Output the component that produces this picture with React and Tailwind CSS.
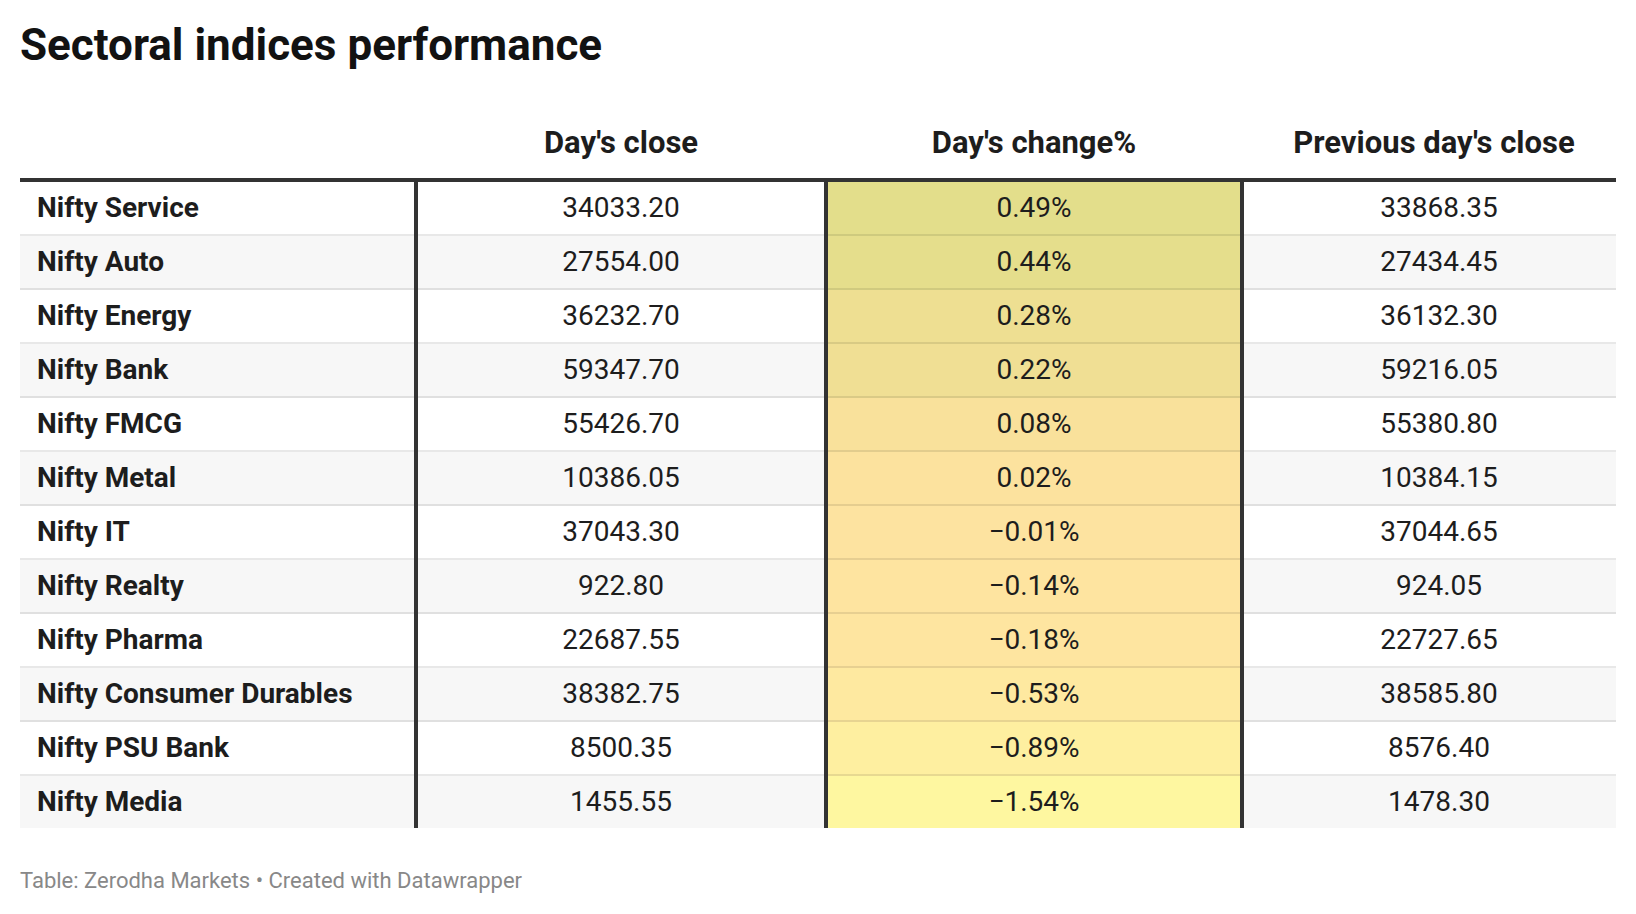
import React from 'react'

const rows = [
  { name: 'Nifty Service', close: '34033.20', change: '0.49%', prev: '33868.35', color: 'bg-[#e3de8b]' },
  { name: 'Nifty Auto', close: '27554.00', change: '0.44%', prev: '27434.45', color: 'bg-[#e5de8c]' },
  { name: 'Nifty Energy', close: '36232.70', change: '0.28%', prev: '36132.30', color: 'bg-[#eedf92]' },
  { name: 'Nifty Bank', close: '59347.70', change: '0.22%', prev: '59216.05', color: 'bg-[#f0df94]' },
  { name: 'Nifty FMCG', close: '55426.70', change: '0.08%', prev: '55380.80', color: 'bg-[#f9e19b]' },
  { name: 'Nifty Metal', close: '10386.05', change: '0.02%', prev: '10384.15', color: 'bg-[#fce29e]' },
  { name: 'Nifty IT', close: '37043.30', change: '\u22120.01%', prev: '37044.65', color: 'bg-[#fde3a0]' },
  { name: 'Nifty Realty', close: '922.80', change: '\u22120.14%', prev: '924.05', color: 'bg-[#fee4a0]' },
  { name: 'Nifty Pharma', close: '22687.55', change: '\u22120.18%', prev: '22727.65', color: 'bg-[#fee5a0]' },
  { name: 'Nifty Consumer Durables', close: '38382.75', change: '\u22120.53%', prev: '38585.80', color: 'bg-[#fee9a0]' },
  { name: 'Nifty PSU Bank', close: '8500.35', change: '\u22120.89%', prev: '8576.40', color: 'bg-[#feefa0]' },
  { name: 'Nifty Media', close: '1455.55', change: '\u22121.54%', prev: '1478.30', color: 'bg-[#fef7a0]' },
]

export default function App() {
  return (
    <div className="min-h-[914px] bg-white px-5 pt-[19px] text-[#1d1d1d] [font-family:Roboto,'Liberation_Sans',sans-serif]">
      <h1 className="text-[44px] font-bold leading-[53px] text-[#121212]">Sectoral indices performance</h1>

      <div>
        {/* header */}
        <div className="flex h-[110px] items-end border-b-4 border-[#333] pb-[17px] text-[31px] font-bold leading-[36px]">
          <div className="w-[394px]" />
          <div className="w-[414px] text-center">Day's close</div>
          <div className="w-[412px] text-center">Day's change%</div>
          <div className="flex-1 pl-[12px] text-center">Previous day's close</div>
        </div>

        {rows.map((r, i) => {
          const last = i === rows.length - 1
          const line = last ? 'h-full' : 'h-full border-b-2 border-black/[0.09]'
          return (
            <div
              key={r.name}
              className={
                'flex text-[28px] leading-[52px] ' +
                (last ? 'h-[52px] ' : 'h-[54px] ') +
                (i % 2 === 1 ? 'bg-[#f7f7f7]' : 'bg-white')
              }
            >
              <div className={'w-[394px] pl-[17px] font-bold ' + line}>{r.name}</div>
              <div className="w-[414px] border-x-4 border-x-[#333] text-center">
                <div className={line}>{r.close}</div>
              </div>
              <div className={'w-[412px] text-center ' + r.color}>
                <div className={line}>{r.change}</div>
              </div>
              <div className="flex-1 border-l-4 border-l-[#333]">
                <div className={'pl-[18px] text-center ' + line}>{r.prev}</div>
              </div>
            </div>
          )
        })}
      </div>

      <p className="mt-[40px] text-[22px] leading-[26px] text-[#888]">
        Table: Zerodha Markets • Created with Datawrapper
      </p>
    </div>
  )
}
